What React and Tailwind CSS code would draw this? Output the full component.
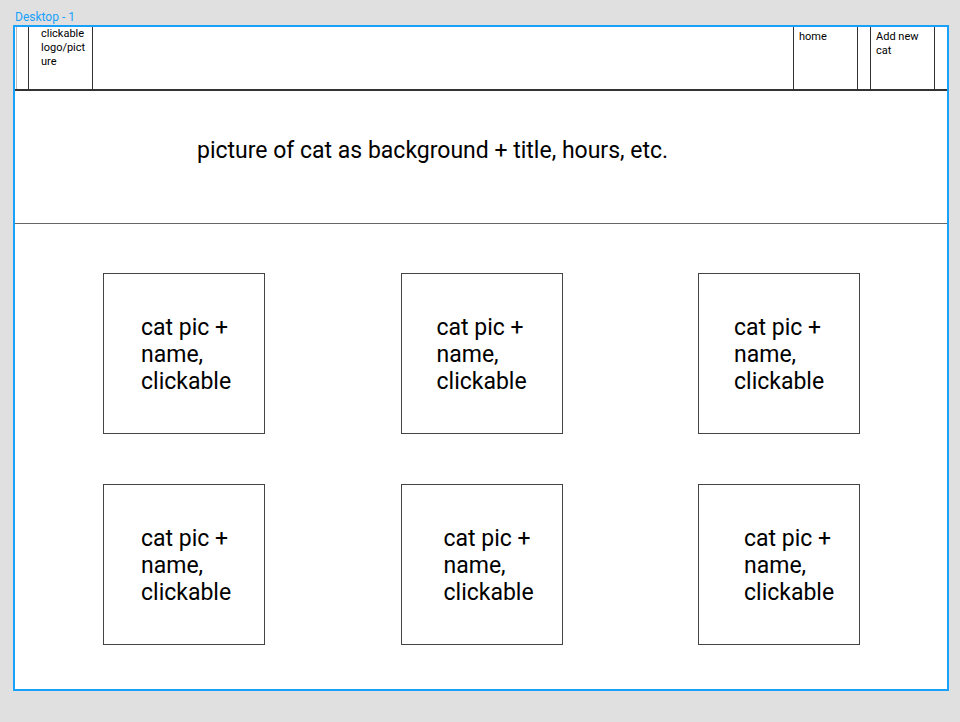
const cards = [
  { id: 1, pad: "pl-[37px]" },
  { id: 2, pad: "pl-[35px]" },
  { id: 3, pad: "pl-[35px]" },
  { id: 4, pad: "pl-[37px]" },
  { id: 5, pad: "pl-[42px]" },
  { id: 6, pad: "pl-[45px]" },
];

function CatCard({ pad }) {
  return (
    <button
      className={`w-[162px] h-[161px] border border-[#444] bg-white flex items-center text-left pt-[2px] ${pad}`}
    >
      <span className="text-[23px] leading-[27px] text-black">
        cat pic +<br />
        name,<br />
        clickable
      </span>
    </button>
  );
}

export default function App() {
  return (
    <div
      className="w-[960px] h-[722px] bg-[#e0e0e0] overflow-hidden"
      style={{ fontFamily: "Roboto, 'Liberation Sans', sans-serif" }}
    >
      {/* frame label */}
      <div className="h-[25px] pl-[15px] pt-[11px] text-[12px] leading-[13px] text-[#18a0fb]">
        Desktop - 1
      </div>

      <div className="ml-[13px] w-[936px] h-[666px] border-2 border-[#18a0fb] bg-white flex flex-col">
        {/* nav bar */}
        <div className="h-[64px] border-b-2 border-[#333] flex text-[11px] leading-[14px] text-black">
          <div className="ml-[1px] w-[13px] border-l border-l-[#bbb] border-r border-r-[#333]" />
          <a className="w-[64px] border-r border-[#333] pl-[12px] pt-[0px] cursor-pointer">
            clickable<br />
            logo/pict<br />
            ure
          </a>
          <div className="flex-1" />
          <a className="w-[65px] border-x border-[#333] pl-[5px] pt-[3px] cursor-pointer">
            home
          </a>
          <div className="w-[12px]" />
          <a className="w-[65px] border-x border-[#333] pl-[5px] pt-[3px] cursor-pointer">
            Add new<br />
            cat
          </a>
          <div className="w-[12px]" />
        </div>

        {/* hero */}
        <div className="h-[133px] border-b border-[#666] pl-[182px] pt-[47px]">
          <p className="text-[23px] leading-[26px] text-black">
            picture of cat as background + title, hours, etc.
          </p>
        </div>

        {/* cat grid */}
        <div className="flex-1 pl-[88px] pt-[49px]">
          <div className="grid grid-cols-[162px_162px_162px] gap-x-[135.5px] gap-y-[50px]">
            {cards.map((c) => (
              <CatCard key={c.id} pad={c.pad} />
            ))}
          </div>
        </div>
      </div>
    </div>
  );
}
